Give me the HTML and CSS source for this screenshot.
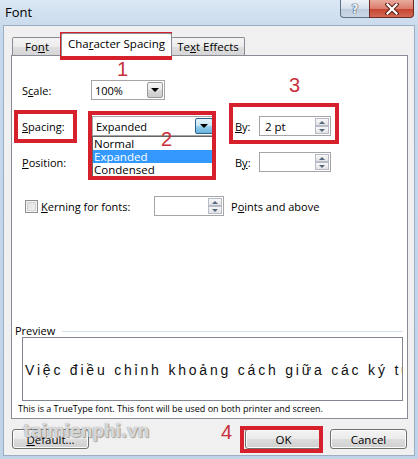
FILE: index.html
```html
<!DOCTYPE html>
<html>
<head>
<meta charset="utf-8">
<title>Font</title>
<link rel="stylesheet" href="styles.css">
</head>
<body>
<div class="window">
  <div class="titlebar">
    <span class="title">Font</span>
    <div class="caption-btns">
      <div class="cbtn help"><span class="qmark">?</span></div>
      <div class="cbtn close">
        <svg width="14" height="12" viewBox="0 0 14 12">
          <path d="M2.5 1.5 L11.5 10.5 M11.5 1.5 L2.5 10.5" stroke="#5a1d17" stroke-width="4.2" stroke-linecap="square" fill="none"/>
          <path d="M2.5 1.5 L11.5 10.5 M11.5 1.5 L2.5 10.5" stroke="#ffffff" stroke-width="2.2" stroke-linecap="square" fill="none"/>
        </svg>
      </div>
    </div>
  </div>

  <div class="client">
    <div class="tabs">
      <div class="tab t-font">Fo<u>n</u>t</div>
      <div class="tab t-char active">Cha<u>r</u>acter Spacing</div>
      <div class="tab t-fx">Te<u>x</u>t Effects</div>
    </div>

    <div class="panel">
      <div class="row r-scale">
        <span class="lbl">S<u>c</u>ale:</span>
        <div class="combo w-scale"><span class="val">100%</span><span class="dd"><i class="tri-down"></i></span></div>
      </div>

      <div class="row r-spacing">
        <span class="lbl"><u>S</u>pacing:</span>
        <div class="combo w-spacing"><span class="val">Expanded</span><span class="dd dd-open"><i class="tri-down"></i></span></div>
        <span class="lbl-by"><u>B</u>y:</span>
        <div class="spin w-by"><span class="val">2 pt</span><span class="arrows"><span><i class="tri-up"></i></span><span><i class="tri-dn"></i></span></span></div>
      </div>

      <div class="row r-position">
        <span class="lbl"><u>P</u>osition:</span>
        <div class="combo w-spacing"><span class="val"></span><span class="dd"><i class="tri-down"></i></span></div>
        <span class="lbl-by">B<u>y</u>:</span>
        <div class="spin w-by"><span class="val"></span><span class="arrows"><span><i class="tri-up"></i></span><span><i class="tri-dn"></i></span></span></div>
      </div>

      <div class="row r-kern">
        <span class="check"></span>
        <span class="lbl-kern"><u>K</u>erning for fonts:</span>
        <div class="spin w-kern"><span class="val"></span><span class="arrows"><span><i class="tri-up"></i></span><span><i class="tri-dn"></i></span></span></div>
        <span class="lbl-pts">P<u>o</u>ints and above</span>
      </div>

      <div class="legend">Preview</div>
      <div class="preview"><span class="sample">Việc điều chỉnh khoảng cách giữa các ký tự</span></div>
      <div class="note">This is a TrueType font. This font will be used on both printer and screen.</div>
    </div>

    <div class="buttons">
      <div class="btn"><span><u>D</u>efault...</span></div>
      <div class="btn btn-ok">OK</div>
      <div class="btn">Cancel</div>
    </div>
  </div>

  <div class="droplist">
    <div class="item">Normal</div>
    <div class="item sel">Expanded</div>
    <div class="item">Condensed</div>
  </div>

  <div class="watermark">taimienphi.vn</div>

  <div class="mark m1"></div>
  <div class="mark m2"></div>
  <div class="mark m3"></div>
  <div class="mark m4"></div>
  <div class="mark m5"></div>
  <div class="num n1">1</div>
  <div class="num n2">2</div>
  <div class="num n3">3</div>
  <div class="num n4">4</div>
</div>
</body>
</html>
```

FILE: styles.css
```css
* { box-sizing: border-box; }
html, body { margin: 0; padding: 0; }
body {
  width: 418px;
  height: 459px;
  overflow: hidden;
  font-family: "Open Sans", "Noto Sans", sans-serif;
  font-size: 11px;
  color: #000;
  background: #c4d7ec;
}
u { text-decoration: underline; text-underline-offset: 1px; }

.window {
  position: relative;
  width: 418px;
  height: 459px;
  display: flex;
  flex-direction: column;
  background: linear-gradient(#dbe7f4, #c7d9ec 30px, #bfd3e9);
}

/* title bar */
.titlebar {
  flex: none;
  height: 25px;
  display: flex;
  justify-content: space-between;
  align-items: flex-start;
  padding-left: 5px;
}
.title { font-size: 13px; line-height: 24px; }
.caption-btns { display: flex; margin-right: 4px; }
.cbtn {
  height: 18px;
  border: 1px solid #5f6f85;
  border-top: none;
  display: flex;
  align-items: center;
  justify-content: center;
}
.help {
  width: 29px;
  border-right: none;
  border-radius: 0 0 0 4px;
  background: linear-gradient(#eef3f9, #d6e0ec 50%, #bccbdc 51%, #cbd8e6);
}
.qmark {
  font-family: "DejaVu Sans", sans-serif;
  font-weight: bold;
  font-size: 12px;
  line-height: 12px;
  color: #f4f7fb;
  text-shadow: 0 0 1px #34465e, 0 0 1px #34465e, 0 0 1px #34465e;
}
.close {
  width: 45px;
  border-color: #6e2a22;
  border-radius: 0 0 4px 0;
  background: linear-gradient(#e9ab9c, #db7d6d 50%, #c5422f 51%, #d36a55);
}

/* client area */
.client {
  flex: 1;
  margin: 0 3px 3px 3px;
  background: #f0f0f0;
  border: 1px solid #9daec2;
  padding: 7px 6px 0 7px;
  display: flex;
  flex-direction: column;
}

.tabs {
  flex: none;
  height: 22px;
  display: flex;
  align-items: flex-end;
  padding-left: 1px;
}
.tab {
  height: 18px;
  border: 1px solid #898c95;
  border-bottom: none;
  border-radius: 2px 2px 0 0;
  background: linear-gradient(#f4f4f4, #ececec 50%, #dfdfdf 51%, #d6d6d6);
  display: flex;
  align-items: center;
  justify-content: center;
  font-size: 11.5px;
}
.t-font { width: 50px; }
.t-char { width: 111px; margin-left: -1px; }
.t-fx { width: 74px; margin-left: -1px; }
.tab.active {
  height: 23px;
  margin-bottom: -1px;
  background: #fff;
  position: relative;
  z-index: 1;
  padding-bottom: 3px;
}

.panel {
  flex: none;
  height: 364px;
  border: 1px solid #898c95;
  background: #fff;
  padding: 0 4px 0 3px;
  display: flex;
  flex-direction: column;
}

.row {
  flex: none;
  display: flex;
  align-items: center;
  height: 20px;
  padding-left: 7px;
}
.r-scale { margin-top: 24px; }
.r-spacing { margin-top: 16px; }
.r-position { margin-top: 16px; }
.r-kern { margin-top: 24px; }
.lbl { width: 69px; }
.r-spacing .lbl, .r-position .lbl { width: 70px; }

.combo {
  height: 20px;
  border: 1px solid #a5a5a5;
  background: #fff;
  display: flex;
  align-items: stretch;
  padding: 1px;
}
.combo .val { flex: 1; padding-left: 2px; line-height: 17px; }
.w-scale { width: 74px; }
.w-spacing { width: 123px; }
.dd {
  width: 16px;
  border: 1px solid #9a9a9a;
  border-radius: 2px;
  background: linear-gradient(#f5f5f5, #e9e9e9 50%, #d9d9d9 51%, #cdcdcd);
  display: flex;
  align-items: center;
  justify-content: center;
}
.dd-open {
  width: 18px;
  border-color: #2c628b;
  background: linear-gradient(#e5f4fc, #c4e5f6 50%, #98d1ef 51%, #68b3db);
}
.tri-down {
  display: block;
  width: 0; height: 0;
  border-left: 4px solid transparent;
  border-right: 4px solid transparent;
  border-top: 4px solid #000;
}

.lbl-by { width: 24px; margin-left: 20px; }
.spin {
  height: 20px;
  border: 1px solid #a5a5a5;
  background: #fff;
  display: flex;
  padding: 1px;
}
.spin .val { flex: 1; padding-left: 4px; line-height: 17px; font-size: 11.5px; }
.w-by { width: 72px; }
.w-kern { width: 70px; }
.arrows { width: 14px; display: flex; flex-direction: column; }
.arrows span {
  flex: 1;
  border: 1px solid #b5bcc7;
  background: linear-gradient(#f8f8f8, #e2e2e2);
  display: flex;
  align-items: center;
  justify-content: center;
}
.tri-up, .tri-dn {
  display: block;
  width: 0; height: 0;
  border-left: 3px solid transparent;
  border-right: 3px solid transparent;
}
.tri-up { border-bottom: 3px solid #55667f; }
.tri-dn { border-top: 3px solid #55667f; }

.check {
  width: 13px;
  height: 13px;
  margin-left: 3px;
  border: 1px solid #8e8f8f;
  background: linear-gradient(135deg, #dcdcdc, #f6f6f6);
  box-shadow: inset 0 0 0 1px #f4f4f4, inset 0 0 0 2px #d3d3d3;
}
.lbl-kern { width: 113px; margin-left: 3px; }
.lbl-pts { margin-left: 7px; }

.legend {
  flex: none;
  margin-top: 109px;
  height: 12px;
  display: flex;
  align-items: center;
  line-height: 12px;
}
.legend::after {
  content: "";
  flex: 1;
  border-top: 1px solid #d5dfe5;
  margin-left: 7px;
}
.preview {
  flex: none;
  margin-left: 7px;
  height: 64px;
  border: 1px solid #828790;
  background: #fff;
  overflow: hidden;
  white-space: nowrap;
  display: flex;
  align-items: center;
  padding-left: 2px;
}
.sample {
  font-family: "Liberation Sans", "DejaVu Sans", sans-serif;
  font-size: 14px;
  letter-spacing: 2.8px;
  color: #111;
  padding-top: 1px;
}
.note {
  flex: none;
  margin-left: 3px;
  font-size: 9px;
  line-height: 16px;
  white-space: nowrap;
}

.buttons {
  flex: none;
  margin-top: 10px;
  display: flex;
  padding: 0 1px;
  gap: 8px;
}
.btn {
  width: 77px;
  height: 20px;
  border: 1px solid #707070;
  border-radius: 3px;
  background: linear-gradient(#f3f3f3, #ebebeb 49%, #dddddd 50%, #cfcfcf);
  box-shadow: inset 0 0 0 1px #fbfbfb;
  display: flex;
  align-items: center;
  justify-content: center;
  font-size: 11.5px;
}
.btn-ok { margin-left: auto; }

/* open dropdown list (overlay) */
.droplist {
  position: absolute;
  left: 92px;
  top: 136px;
  width: 122px;
  height: 41px;
  border: 1px solid #646464;
  background: #fff;
  font-size: 11.5px;
}
.item { height: 13px; line-height: 13px; padding-left: 1px; }
.item.sel { background: #3399ff; color: #fff; }

/* watermark */
.watermark {
  position: absolute;
  left: 23px;
  top: 421px;
  font-family: "DejaVu Sans", sans-serif;
  font-weight: bold;
  font-size: 17px;
  letter-spacing: -0.5px;
  color: rgba(255, 255, 255, 0.72);
  text-shadow: 0 0 1px rgba(90, 90, 90, 0.8), 1px 1px 1px rgba(120, 120, 120, 0.6);
}

/* red annotations */
.mark {
  position: absolute;
  border: 4px solid #d6202b;
}
.m1 { left: 60px; top: 32px; width: 112px; height: 28px; }
.m2 { left: 14px; top: 110px; width: 63px; height: 33px; }
.m3 { left: 88px; top: 111px; width: 128px; height: 69px; }
.m4 { left: 229px; top: 103px; width: 110px; height: 41px; }
.m5 { left: 240px; top: 426px; width: 83px; height: 27px; }
.num {
  position: absolute;
  font-family: "Liberation Sans", sans-serif;
  font-size: 20px;
  line-height: 20px;
  color: #c8303a;
}
.n1 { left: 117px; top: 59px; }
.n2 { left: 161px; top: 129px; }
.n3 { left: 289px; top: 75px; }
.n4 { left: 221px; top: 422px; }
```
